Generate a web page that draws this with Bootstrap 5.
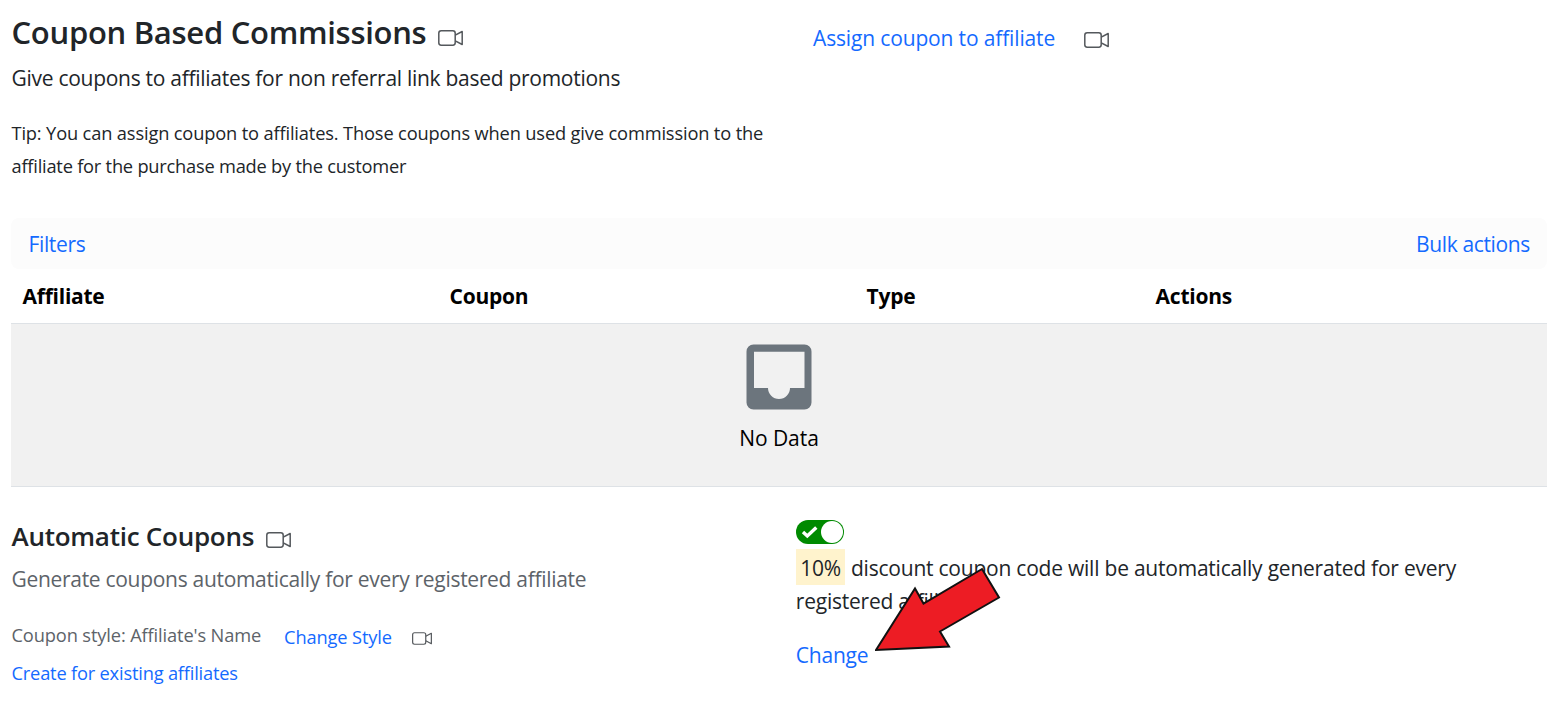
<!DOCTYPE html>
<html lang="en">
<head>
<meta charset="utf-8">
<meta name="viewport" content="width=device-width, initial-scale=1">
<title>Coupon Based Commissions</title>
<link href="https://cdn.jsdelivr.net/npm/bootstrap@5.3.0/dist/css/bootstrap.min.css" rel="stylesheet">
<style>
body{font-family:"Open Sans","Noto Sans",sans-serif;font-size:21px;line-height:33px;color:#212529;letter-spacing:-.28px;background:#fff}
a{color:#146aff;text-decoration:none}
.page{padding:13px 11px 0 11px;height:720px;overflow:hidden}
.page-title{font-size:31px;font-weight:600;line-height:38px;letter-spacing:-.29px;margin:0 0 11px}
.page-title .cam{margin:17px 0 0 12px}
.tip{font-size:18.25px;letter-spacing:-.15px;margin:21px 0 0}
.tip-end{letter-spacing:-.22px}
.top-row{height:205px}
.left-col{width:784px;flex:none;padding-left:.5px}
.cam{width:25px;height:16px;flex:none;fill:none;stroke:#54585c;stroke-width:1.5;stroke-linejoin:round}
.assign{margin:9px 0 0 18px;letter-spacing:-.15px}
.assign .cam{margin:10px 0 0 28.5px}
.toolbar-strip{height:51px;background:#fcfcfc;padding:2px 17px 0 17.5px}
.toolbar-strip a{letter-spacing:-.36px}
.coupon-table{table-layout:fixed;margin:0;color:#000}
.col-affiliate{width:427px}
.col-coupon{width:417px}
.col-type{width:289px}
.coupon-table th{height:54px;padding:11px 11px 11px 11.6px;line-height:32px;letter-spacing:-.25px;border-bottom:0;vertical-align:top}
.coupon-table .empty{height:163px;padding:0;background:#f1f1f1;border-top:1px solid #dee2e6;border-bottom:1px solid #dee2e6;box-shadow:none;color:#000;letter-spacing:-.05px}
.empty svg{display:block;margin:20px auto 12px}
.auto-row{padding-top:33px}
.section-title{font-size:26px;font-weight:600;line-height:36px;letter-spacing:-.26px;margin:-2px 0 0}
.section-title .cam{margin:14px 0 0 12px}
.muted{color:#5d6369}
.summary{margin:9px 0 0;letter-spacing:-.3px}
.fs-sm{font-size:18.25px;letter-spacing:-.13px}
.style-row{margin-top:22px}
.style-row a{margin:2px 0 0 23px}
.style-row .cam{width:20px;height:13px;margin:14px 0 0 20.5px}
.create-link{margin-top:3px;letter-spacing:-.19px}
.auto-text{width:700px;margin-left:.8px;letter-spacing:-.225px}
.switch{width:48px;height:24px;border-radius:12px;background:#008a00}
.auto-text p{margin:8px 0 0}
.pct{display:inline-block;height:36px;line-height:39px;margin:-3px 6px -2px 0;vertical-align:top;background:#fff3cd;padding:0 4px 0 4.5px}
.change-link{margin-top:21px}
.pointer-arrow{left:79px;top:47px}
</style>
</head>
<body>
<svg class="d-none" xmlns="http://www.w3.org/2000/svg">
<symbol id="camera" viewBox="0 0 25 16"><rect x=".8" y=".8" width="16.4" height="14.4" rx="2.4"/><path d="M17.2 5.1 24.2 1.5V14.5L17.2 10.9"/></symbol>
</svg>
<main class="page">
  <section class="top-row d-flex">
    <div class="left-col">
      <h1 class="page-title d-flex">Coupon Based Commissions<svg class="cam"><use href="#camera"/></svg></h1>
      <p class="m-0">Give coupons to affiliates for non referral link based promotions</p>
      <p class="tip">Tip: You can assign coupon to affiliates. Those coupons when used give commission to the<br><span class="tip-end">affiliate for the purchase made by the customer</span></p>
    </div>
    <div class="assign d-flex"><a href="#">Assign coupon to affiliate</a><svg class="cam"><use href="#camera"/></svg></div>
  </section>

  <section>
    <div class="toolbar-strip rounded-3 d-flex justify-content-between align-items-center"><a href="#">Filters</a><a href="#">Bulk actions</a></div>
    <table class="table coupon-table">
      <colgroup><col class="col-affiliate"><col class="col-coupon"><col class="col-type"><col></colgroup>
      <thead><tr><th>Affiliate</th><th>Coupon</th><th>Type</th><th>Actions</th></tr></thead>
      <tbody><tr><td class="empty text-center align-top" colspan="4">
        <svg width="66" height="66" viewBox="0 0 66 66"><path fill="#6c757d" fill-rule="evenodd" d="M7.500.5h51a7 7 0 0 1 7 7v51a7 7 0 0 1-7 7h-51a7 7 0 0 1-7-7v-51a7 7 0 0 1 7-7ZM8 7.800V44H22a11 11 0 0 0 22 0h14.500V7.800Z"/></svg>
        No Data
      </td></tr></tbody>
    </table>
  </section>

  <section class="auto-row d-flex">
    <div class="left-col">
      <h2 class="section-title d-flex">Automatic Coupons<svg class="cam"><use href="#camera"/></svg></h2>
      <p class="summary muted">Generate coupons automatically for every registered affiliate</p>
      <div class="style-row fs-sm d-flex"><span class="muted">Coupon style: Affiliate's Name</span><a href="#">Change Style</a><svg class="cam" viewBox="0 0 25 16"><use href="#camera" width="25" height="16"/></svg></div>
      <a href="#" class="create-link fs-sm d-block">Create for existing affiliates</a>
    </div>
    <div class="auto-text position-relative">
      <div class="switch"><svg class="d-block" width="48" height="24" viewBox="0 0 48 24"><circle cx="36" cy="12" r="11" fill="#fff"/><path d="m7 12 4.300 4 9-8.500" fill="none" stroke="#fff" stroke-width="3.400"/></svg></div>
      <p><span class="pct">10%</span>discount coupon code will be automatically generated for every<br>registered affiliate</p>
      <a href="#" class="change-link d-block">Change</a>
      <svg class="pointer-arrow position-absolute" width="126" height="86" viewBox="0 0 126 86"><path d="M1 83 40 21.500 48.500 36.500 107 2 124 30.500 65 64.500 74 79.500Z" fill="#ed1c24" stroke="#111" stroke-width="2"/></svg>
    </div>
  </section>
</main>
<script src="https://cdn.jsdelivr.net/npm/bootstrap@5.3.0/dist/js/bootstrap.bundle.min.js"></script>
</body>
</html>
